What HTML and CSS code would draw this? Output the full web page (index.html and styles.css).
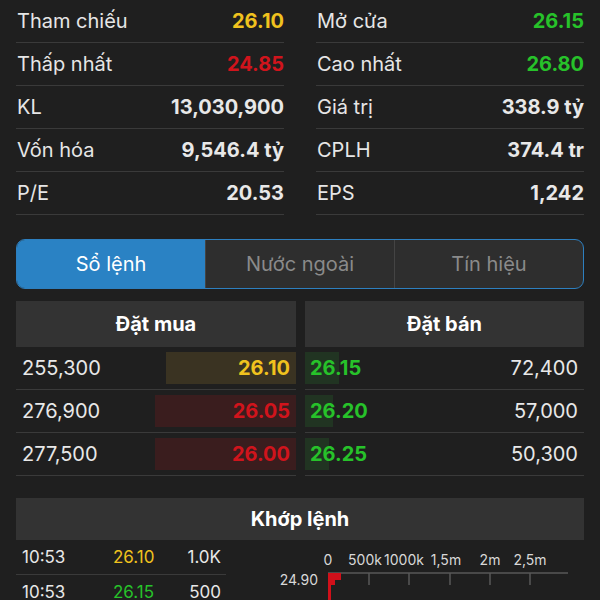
FILE: index.html
```html
<!DOCTYPE html>
<html>
  <head>
    <title>Chi tiết cổ phiếu</title>
    <link rel="stylesheet" href="styles.css">
  </head>
  <body>

    <div class="stats">
      <div class="stat-col">
        <div class="stat-row"><span class="stat-label">Tham chiếu</span><span class="stat-value yellow">26.10</span></div>
        <div class="stat-row"><span class="stat-label">Thấp nhất</span><span class="stat-value red">24.85</span></div>
        <div class="stat-row"><span class="stat-label">KL</span><span class="stat-value">13,030,900</span></div>
        <div class="stat-row"><span class="stat-label">Vốn hóa</span><span class="stat-value">9,546.4 tỷ</span></div>
        <div class="stat-row"><span class="stat-label">P/E</span><span class="stat-value">20.53</span></div>
      </div>
      <div class="stat-col">
        <div class="stat-row"><span class="stat-label">Mở cửa</span><span class="stat-value green">26.15</span></div>
        <div class="stat-row"><span class="stat-label">Cao nhất</span><span class="stat-value green">26.80</span></div>
        <div class="stat-row"><span class="stat-label">Giá trị</span><span class="stat-value">338.9 tỷ</span></div>
        <div class="stat-row"><span class="stat-label">CPLH</span><span class="stat-value">374.4 tr</span></div>
        <div class="stat-row"><span class="stat-label">EPS</span><span class="stat-value">1,242</span></div>
      </div>
    </div>

    <div class="tabs">
      <div class="tab active">Sổ lệnh</div>
      <div class="tab">Nước ngoài</div>
      <div class="tab">Tín hiệu</div>
    </div>

    <div class="book">
      <div class="book-side">
        <div class="book-head">Đặt mua</div>
        <div class="book-row">
          <span class="vol">255,300</span>
          <span class="bid-price yellow bar-yellow" style="width: 130px">26.10</span>
        </div>
        <div class="book-row">
          <span class="vol">276,900</span>
          <span class="bid-price red bar-red" style="width: 141px">26.05</span>
        </div>
        <div class="book-row">
          <span class="vol">277,500</span>
          <span class="bid-price red bar-red" style="width: 141px">26.00</span>
        </div>
      </div>
      <div class="book-side">
        <div class="book-head">Đặt bán</div>
        <div class="book-row">
          <span class="ask-price green"><i class="bar-green" style="width: 34px"></i>26.15</span>
          <span class="vol">72,400</span>
        </div>
        <div class="book-row">
          <span class="ask-price green"><i class="bar-green" style="width: 28px"></i>26.20</span>
          <span class="vol">57,000</span>
        </div>
        <div class="book-row">
          <span class="ask-price green"><i class="bar-green" style="width: 24px"></i>26.25</span>
          <span class="vol">50,300</span>
        </div>
      </div>
    </div>

    <div class="match">
      <div class="match-head">Khớp lệnh</div>
      <div class="match-body">
        <div class="trades">
          <div class="trade-row"><span>10:53</span><span class="yellow">26.10</span><span class="t-vol">1.0K</span></div>
          <div class="trade-row"><span>10:53</span><span class="green">26.15</span><span class="t-vol">500</span></div>
        </div>
        <svg class="chart" width="354" height="60" viewBox="0 0 354 60">
          <g class="axis-labels" text-anchor="middle">
            <text x="98" y="25">0</text>
            <text x="135" y="25">500k</text>
            <text x="174" y="25">1000k</text>
            <text x="216" y="25">1,5m</text>
            <text x="260" y="25">2m</text>
            <text x="300" y="25">2,5m</text>
          </g>
          <text class="row-label" x="88" y="45" text-anchor="end">24.90</text>
          <line x1="98" y1="33" x2="338" y2="33" stroke="#595959" stroke-width="1.5"/>
          <g stroke="#595959" stroke-width="1.5">
            <line x1="139" y1="33" x2="139" y2="45"/>
            <line x1="179" y1="33" x2="179" y2="45"/>
            <line x1="220" y1="33" x2="220" y2="45"/>
            <line x1="260" y1="33" x2="260" y2="45"/>
            <line x1="300" y1="33" x2="300" y2="45"/>
          </g>
          <rect x="98" y="33" width="13" height="7" fill="#d0101a"/>
          <rect x="98" y="40" width="7" height="5" fill="#d0101a"/>
          <rect x="98" y="45" width="3" height="15" fill="#d0101a"/>
        </svg>
      </div>
    </div>

  </body>
</html>
```

FILE: styles.css
```css
body {
  margin: 0;
  background-color: #1f1f1f;
  color: #e8e8e8;
  font-family: Inter, Roboto, sans-serif;
  overflow: hidden;
}
.yellow { color: #f0c21e; }
.red { color: #d0141c; }
.green { color: #27c22a; }

/* thong tin chung */
.stats {
  display: grid;
  grid-template-columns: 1fr 1fr;
  column-gap: 32px;
  padding: 0 16px;
}
.stat-row {
  display: flex;
  justify-content: space-between;
  align-items: center;
  height: 42px;
  border-bottom: 1px solid #3a3a3a;
  font-size: 20px;
}
.stat-label {
  color: #e6e6e6;
  padding-left: 1px;
}
.stat-value {
  font-weight: 700;
}

/* tabs */
.tabs {
  display: flex;
  margin: 24px 16px 0;
  height: 48px;
  border: 1px solid #2d7fbf;
  border-radius: 9px;
  overflow: hidden;
  background-color: #2e2e2e;
}
.tab {
  flex: 1;
  display: flex;
  align-items: center;
  justify-content: center;
  font-size: 20px;
  color: #8a8a8a;
  border-left: 1px solid #444;
}
.tab:first-child {
  border-left: none;
}
.tab.active {
  background-color: #2a82c4;
  color: #fff;
}

/* so lenh */
.book {
  display: grid;
  grid-template-columns: 280px 279px;
  column-gap: 9px;
  margin: 12px 16px 0;
}
.book-head {
  height: 46px;
  display: flex;
  align-items: center;
  justify-content: center;
  background-color: #333;
  font-size: 20px;
  font-weight: 700;
  color: #fff;
}
.book-row {
  display: flex;
  justify-content: space-between;
  align-items: center;
  height: 42px;
  border-bottom: 1px solid #3a3a3a;
  font-size: 20px;
}
.vol {
  padding: 0 6px;
  color: #e8e8e8;
}
.bid-price {
  height: 32px;
  display: flex;
  align-items: center;
  justify-content: flex-end;
  padding-right: 6px;
  box-sizing: border-box;
  font-weight: 700;
}
.bar-yellow { background-color: #3a3322; }
.bar-red { background-color: #3a1d1e; }
.ask-price {
  position: relative;
  z-index: 0;
  height: 32px;
  display: flex;
  align-items: center;
  padding-left: 5px;
  font-weight: 700;
}
.bar-green {
  position: absolute;
  z-index: -1;
  left: 0;
  top: 0;
  bottom: 0;
  background-color: #213422;
}

/* khop lenh */
.match {
  margin: 22px 16px 0;
}
.match-head {
  height: 42px;
  display: flex;
  align-items: center;
  justify-content: center;
  background-color: #333;
  font-size: 20px;
  font-weight: 700;
  color: #fff;
}
.match-body {
  display: flex;
}
.trades {
  width: 210px;
}
.trade-row {
  display: grid;
  grid-template-columns: 91px 1fr auto;
  align-items: center;
  height: 34px;
  padding: 0 5px 0 6px;
  border-bottom: 1px solid #3a3a3a;
  font-size: 17px;
}
.t-vol {
  text-align: right;
}
.chart {
  display: block;
  margin-left: 4px;
}
.axis-labels text,
.row-label {
  fill: #d8d8d8;
  font-size: 14px;
  font-family: Inter, Roboto, sans-serif;
}
```
